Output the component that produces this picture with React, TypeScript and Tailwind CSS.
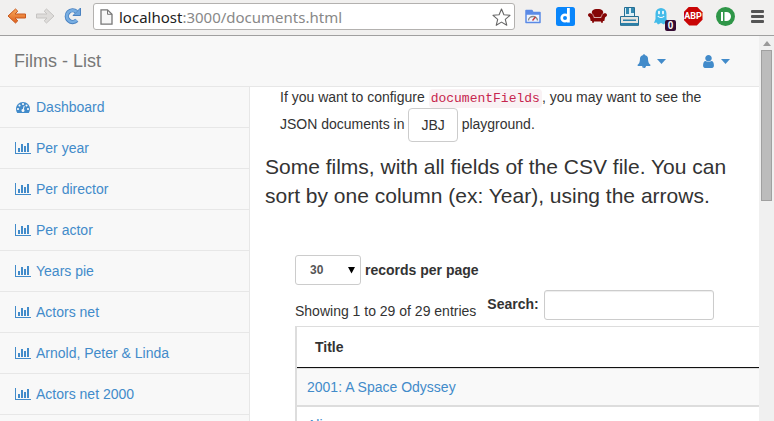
import type { ReactNode } from "react";

const menu = [
  "Per year",
  "Per director",
  "Per actor",
  "Years pie",
  "Actors net",
  "Arnold, Peter & Linda",
  "Actors net 2000",
];

function Caret() {
  return (
    <svg width="9" height="5" viewBox="0 0 9 5" fill="currentColor" aria-hidden="true">
      <path d="M0 0h9L4.5 5z" />
    </svg>
  );
}

function DashboardIcon() {
  return (
    <svg width="16" height="14" viewBox="0 0 1792 1792" fill="currentColor" aria-hidden="true">
      <path d="M384 1152q0-53-37.5-90.5t-90.5-37.5-90.5 37.5-37.5 90.5 37.5 90.5 90.5 37.5 90.5-37.5 37.5-90.5zm192-448q0-53-37.5-90.5t-90.5-37.5-90.5 37.5-37.5 90.5 37.5 90.5 90.5 37.5 90.5-37.5 37.5-90.5zm428 481l101-382q6-26-7.5-48.5t-38.5-29.5-48 6.5-30 39.5l-101 382q-60 5-107 43.5t-63 98.5q-20 77 20 146t117 89 146-20 89-117q16-60-6-117t-72-91zm660-33q0-53-37.5-90.5t-90.5-37.5-90.5 37.5-37.5 90.5 37.5 90.5 90.5 37.5 90.5-37.5 37.5-90.5zm-640-640q0-53-37.5-90.5t-90.5-37.5-90.5 37.5-37.5 90.5 37.5 90.5 90.5 37.5 90.5-37.5 37.5-90.5zm448 192q0-53-37.5-90.5t-90.5-37.5-90.5 37.5-37.5 90.5 37.5 90.5 90.5 37.5 90.5-37.5 37.5-90.5zm320 448q0 261-141 483-19 29-54 29h-1402q-35 0-54-29-141-221-141-483 0-182 71-348t191-286 286-191 348-71 348 71 286 191 191 286 71 348z" />
    </svg>
  );
}

function ChartIcon() {
  return (
    <svg width="16" height="12" viewBox="0 0 16 12" fill="currentColor" aria-hidden="true">
      <path d="M0 0h1v11h15v1H0zM3 6h2v4H3zM6 2h2v8H6zM9 4h2v6H9zM12 1h2v9h-2z" />
    </svg>
  );
}

function BellIcon() {
  return (
    <svg width="14" height="14" viewBox="0 0 1792 1792" fill="currentColor" aria-hidden="true">
      <path d="M912 1696q0-16-16-16-59 0-101.5-42.5t-42.5-101.5q0-16-16-16t-16 16q0 73 51.5 124.5t124.5 51.5q16 0 16-16zm816-288q0 52-38 90t-90 38h-448q0 106-75 181t-181 75-181-75-75-181h-448q-52 0-90-38t-38-90q50-42 91-88t85-119.5 74.5-158.5 50-206 19.5-260q0-152 117-282.5t307-158.5q-8-19-8-39 0-40 28-68t68-28 68 28 28 68q0 20-8 39 190 28 307 158.5t117 282.5q0 139 19.5 260t50 206 74.5 158.5 85 119.5 91 88z" />
    </svg>
  );
}

function UserIcon() {
  return (
    <svg width="13" height="13" viewBox="0 128 1280 1536" fill="currentColor" aria-hidden="true">
      <path d="M1280 1399q0 109-62.5 187t-150.5 78h-854q-88 0-150.5-78t-62.5-187q0-85 8.5-160.5t31.5-152 58.5-131 94-89 134.5-34.5q131 128 313 128t313-128q76 0 134.5 34.5t94 89 58.5 131 31.5 152 8.5 160.5zm-256-887q0 159-112.5 271.5t-271.5 112.5-271.5-112.5-112.5-271.5 112.5-271.5 271.5-112.5 271.5 112.5 112.5 271.5z" />
    </svg>
  );
}

function ToolButton({ label, children }: { label: string; children: ReactNode }) {
  return (
    <button type="button" aria-label={label} className="flex h-8 w-8 shrink-0 items-center justify-center">
      {children}
    </button>
  );
}

function BrowserBar() {
  return (
    <div className="flex h-9 shrink-0 items-start border-b border-[#a0a0a0] bg-[#f1f0ef] pr-px">
      <div className="flex w-[93px] shrink-0 items-center pl-px">
        <ToolButton label="Back">
          <svg width="20" height="18" viewBox="0 0 20 18">
            <defs>
              <linearGradient id="back" x1="0" y1="0" x2="0" y2="1">
                <stop offset="0" stopColor="#f9a95c" />
                <stop offset="1" stopColor="#dd5f1c" />
              </linearGradient>
            </defs>
            <path d="M1 9 8.500 2 10.800 4.200 8 7h10.500v4H8l2.800 2.800L8.500 16z" fill="url(#back)" stroke="#c8581e" strokeLinejoin="round" />
          </svg>
        </ToolButton>
        <button type="button" aria-label="Forward" className="flex h-8 w-6 shrink-0 items-center justify-center">
          <svg width="20" height="18" viewBox="0 0 20 18">
            <path d="M19 9 11.500 2 9.200 4.200 12 7H1.500v4H12l-2.800 2.800 2.300 2.200z" fill="#dedcda" stroke="#c6c4c2" strokeLinejoin="round" />
          </svg>
        </button>
        <ToolButton label="Reload">
          <svg width="18" height="18" viewBox="0 0 18 18">
            <path d="M12.800 13.200A5.800 5.800 0 1 1 12.500 4.800" fill="none" stroke="#4a82c0" strokeWidth="4.400" />
            <path d="M16.500 1v7.500H9z" fill="#6fa5dc" stroke="#4a82c0" strokeLinejoin="round" />
            <path d="M12.800 13.200A5.800 5.800 0 1 1 12.500 4.800" fill="none" stroke="#78aee2" strokeWidth="2.600" />
          </svg>
        </ToolButton>
      </div>
      <div className="mt-[3px] flex h-[27px] min-w-0 flex-1 items-center rounded-[3px] border border-[#b3b1af] bg-white pl-[6px]">
        <svg width="13" height="16" viewBox="0 0 13 16" className="shrink-0" aria-hidden="true">
          <path d="M1 .8h6.500L12 5.300v9.900H1z" fill="#f7f7f7" stroke="#777" strokeWidth="1.300" />
          <path d="M7.500 1v4.300H12" fill="none" stroke="#777" />
        </svg>
        <div className="ml-[6px] min-w-0 flex-1 truncate font-['Noto_Sans','Open_Sans',sans-serif] text-[15px] leading-6 text-[#888]">
          <span className="text-[#222]">localhost</span>:3000/documents.html
        </div>
        <button type="button" aria-label="Bookmark this page" className="mr-[3px] shrink-0">
          <svg width="19" height="18" viewBox="0 0 19 18">
            <path d="m9.500 1 2.400 5.800 6.100.5-4.700 4 1.500 6-5.300-3.200-5.300 3.200 1.500-6-4.700-4 6.100-.5z" fill="#fff" stroke="#666" strokeWidth="1.100" strokeLinejoin="round" />
          </svg>
        </button>
      </div>
      <div className="flex shrink-0 pl-[2px]">
        <ToolButton label="Page speed">
          <svg width="16" height="16" viewBox="0 0 16 16">
            <path d="M1 2.500h6l1 2h7v10H1z" fill="#eef4ff" stroke="#5b8ae6" strokeWidth="1.500" strokeLinejoin="round" />
            <path d="M1 2h6l1 3h7v1.800H1z" fill="#5b8ae6" />
            <path d="M3.500 12.500a4.500 4 0 0 1 9 0" fill="none" stroke="#888" strokeWidth="1.400" />
            <path d="m7.500 12.500 3-3.500" stroke="#c33" strokeWidth="1.300" />
          </svg>
        </ToolButton>
        <ToolButton label="Diigo">
          <svg width="19" height="19" viewBox="0 0 19 19">
            <rect width="19" height="19" rx="2.500" fill="#0a86fb" />
            <circle cx="9" cy="11" r="3.300" fill="none" stroke="#fff" strokeWidth="2.600" />
            <path d="M11 1h2.800v14.500H11z" fill="#fff" />
          </svg>
        </ToolButton>
        <ToolButton label="Couch">
          <svg width="19" height="15" viewBox="0 0 19 15" fill="#850505">
            <path d="M4 5C3.200 1.500 5 0 9.500 0S15.800 1.500 15 5l-1.800 3H5.800z" />
            <path d="M0 6c0-2 3-2.500 4.300-.5L6 9h7l1.700-3.500C16 3.500 19 4 19 6c0 1.800-1.500 1.600-2 2.500l-.7 3.500H15l-.5 2h-1l-.5-1.500H6L5.500 14h-1L4 12H2.700L2 8.500C1.500 7.600 0 7.800 0 6z" />
            <path d="M4.500 4.500 6.500 8.500h6l2-4" fill="none" stroke="#c88" strokeWidth=".7" />
          </svg>
        </ToolButton>
        <ToolButton label="Typewriter">
          <svg width="19" height="19" viewBox="0 0 19 19">
            <path d="M4.500.5h10v9h-10z" fill="#dceef5" stroke="#266f94" />
            <path d="M6 1h3v6H6zM11 1h3v5h-3z" fill="#3489b0" />
            <path d="M.5 9.500h18v8.900H.5z" fill="#e7e4df" stroke="#266f94" />
            <path d="M3 12.500h13V14H3zM1 16h17v2H1z" fill="#2b7fa8" />
          </svg>
        </ToolButton>
        <div className="relative">
          <ToolButton label="Ghostery">
            <svg width="16" height="18" viewBox="0 0 16 18">
              <path d="M2.500 12V6.500a5.500 5.500 0 0 1 11 0V12l1.500 4-2.500-.5L11 17.500 8 16l-3 1.500-1.500-2L1 16z" fill="#43bbe9" />
              <path d="M6 4.500v2M10 4.500v2" stroke="#fff" strokeWidth="1.700" strokeLinecap="round" />
              <path d="M4.800 9c1.500 2 5 2 6.400 0" fill="none" stroke="#fff" strokeWidth="1.100" />
            </svg>
          </ToolButton>
          <span className="absolute left-5 top-5 flex h-[11px] w-[11px] items-center justify-center rounded-[2px] bg-[#330a33] font-['Liberation_Sans',sans-serif] text-[10px] font-bold leading-[11px] text-white">
            0
          </span>
        </div>
        <ToolButton label="Adblock Plus">
          <span className="flex h-[19px] w-[19px] items-center justify-center bg-[#c90505] font-['Roboto',sans-serif] text-[9px] font-bold leading-[19px] text-white [clip-path:polygon(30%_0,70%_0,100%_30%,100%_70%,70%_100%,30%_100%,0_70%,0_30%)]">
            ABP
          </span>
        </ToolButton>
        <ToolButton label="Pushbullet">
          <svg width="19" height="19" viewBox="0 0 19 19">
            <circle cx="9.500" cy="9.500" r="9.500" fill="#2f9648" />
            <path d="M5 5h2v9H5zM8.500 5h2a4.500 4.500 0 0 1 0 9h-2z" fill="#fff" />
          </svg>
        </ToolButton>
        <ToolButton label="Menu">
          <svg width="13" height="13" viewBox="0 0 13 13" fill="#555">
            <rect width="13" height="3" rx="1" />
            <rect y="5" width="13" height="3" rx="1" />
            <rect y="10" width="13" height="3" rx="1" />
          </svg>
        </ToolButton>
      </div>
    </div>
  );
}

function SideItem({ icon, children }: { icon: ReactNode; children: ReactNode }) {
  return (
    <li className="border-b border-[#e7e7e7]">
      <a href="#" className="flex h-10 items-center gap-[5px] pl-[15px]">
        <span className="flex w-4 justify-center">{icon}</span>
        {children}
      </a>
    </li>
  );
}

export default function App() {
  return (
    <div className="flex h-screen flex-col overflow-hidden bg-white font-['Liberation_Sans',Arial,sans-serif] text-[14px] leading-5 text-[#333]">
      <BrowserBar />
      <div className="flex min-h-0 flex-1">
        <div className="flex min-w-0 flex-1 flex-col">
          <header className="flex h-[51px] shrink-0 items-center justify-between border-b border-[#e7e7e7] bg-[#f8f8f8] pl-[14px] pr-[29px] text-[#428bca]">
            <a href="#" className="text-[18px] leading-5 text-[#777]">Films - List</a>
            <nav className="flex gap-9">
              <button type="button" aria-label="Alerts" className="flex items-center gap-[6px]">
                <BellIcon />
                <Caret />
              </button>
              <button type="button" aria-label="User" className="flex items-center gap-[6px]">
                <UserIcon />
                <Caret />
              </button>
            </nav>
          </header>
          <div className="flex min-h-0 flex-1">
            <aside className="w-[250px] shrink-0 overflow-hidden border-r border-[#e7e7e7] bg-[#f8f8f8] text-[#428bca]">
              <ul>
                <SideItem icon={<DashboardIcon />}>Dashboard</SideItem>
                {menu.map((name) => (
                  <SideItem key={name} icon={<ChartIcon />}>{name}</SideItem>
                ))}
              </ul>
            </aside>
            <main className="min-w-0 flex-1 overflow-hidden pl-[15px]">
              <p className="pl-[15px] pr-[30px]">
                If you want to configure{" "}
                <code className="rounded bg-[#f9f2f4] px-[2px] py-[2px] font-['Liberation_Mono',monospace] text-[13px] leading-[18px] text-[#c7254e]">documentFields</code>
                , you may want to see the JSON documents in{" "}
                <button type="button" className="inline-block rounded border border-[#ccc] bg-white px-3 py-[6px] align-middle leading-5">JBJ</button>
                {" "}playground.
              </p>
              <h1 className="mt-[10px] pr-[15px] text-[21px] leading-[29px]">
                Some films, with all fields of the CSV file. You can sort by one column (ex: Year), using the arrows.
              </h1>
              <div className="mt-[45px] pl-[30px]">
                <label className="flex items-center gap-1 font-bold">
                  <span className="relative">
                    <select className="block h-[30px] w-[66px] appearance-none rounded-[3px] border border-[#ccc] bg-white pl-[14px] text-[12px] font-bold text-[#555]">
                      <option>30</option>
                    </select>
                    <svg width="7" height="7" viewBox="0 0 7 7" className="pointer-events-none absolute right-[6px] top-3" aria-hidden="true">
                      <path d="M0 0h7L3.500 6.500z" fill="#000" />
                    </svg>
                  </span>
                  records per page
                </label>
                <div className="mt-[5px] flex items-start">
                  <div className="pt-[11px]">Showing 1 to 29 of 29 entries</div>
                  <label className="ml-[11px] flex items-center gap-[5px] font-bold">
                    <span className="pb-[2px]">Search:</span>
                    <input type="text" className="h-[30px] w-[170px] rounded-[3px] border border-[#ccc] bg-white px-2 text-[12px] font-normal shadow-[inset_0_1px_1px_rgba(0,0,0,0.075)]" />
                  </label>
                </div>
                <table className="mt-[5px] w-full border-separate border-spacing-0 border-l-2 border-t border-[#ddd] text-left">
                  <thead>
                    <tr>
                      <th className="h-[41px] border-b border-[#111] pl-[18px] font-bold">Title</th>
                    </tr>
                  </thead>
                  <tbody>
                    <tr>
                      <td className="border-b-2 border-t border-[#ddd] bg-[#f9f9f9] py-2 pl-[10px]">
                        <a href="#" className="text-[#428bca]">2001: A Space Odyssey</a>
                      </td>
                    </tr>
                    <tr>
                      <td className="py-2 pl-[10px]">
                        <a href="#" className="text-[#428bca]">Alien</a>
                      </td>
                    </tr>
                  </tbody>
                </table>
              </div>
            </main>
          </div>
        </div>
        <div className="flex w-[15px] shrink-0 flex-col items-center bg-[#f0f0f0]" aria-hidden="true">
          <div className="flex h-[14px] items-center">
            <svg width="8" height="5" viewBox="0 0 8 5">
              <path d="M0 5h8L4 0z" fill="#999" />
            </svg>
          </div>
          <div className="h-[151px] w-[11px] border border-[#a0a0a0] bg-[#bcbcbc]" />
        </div>
      </div>
    </div>
  );
}
